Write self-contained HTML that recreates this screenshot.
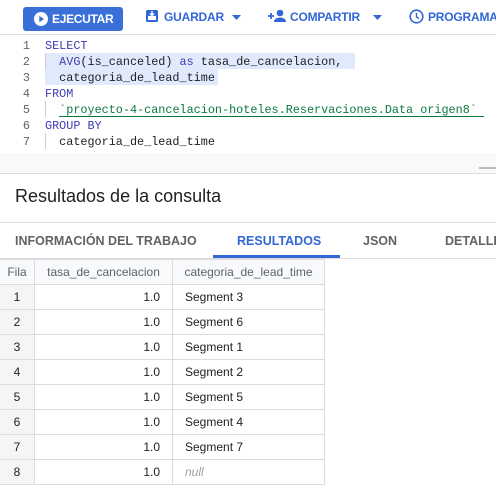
<!DOCTYPE html>
<html><head><meta charset="utf-8"><style>
*{margin:0;padding:0;box-sizing:border-box}
body{width:496px;height:489px;overflow:hidden;background:#fff;font-family:"Liberation Sans",sans-serif;position:relative}
.abs{position:absolute}
.tb{top:0;left:0;width:496px;height:35px;border-bottom:1px solid #dadce0;background:#fff}
.btn{left:23px;top:7px;width:100px;height:24px;background:#3b6fd8;border-radius:3px;color:#fff;font-weight:bold;font-size:12px;letter-spacing:-0.3px;line-height:24px;padding-left:29px}
.tbt{top:10px;font-weight:bold;font-size:12px;letter-spacing:-0.2px;color:#3367d6}
.code{font-family:"Liberation Mono",monospace;font-size:11.8px;line-height:16px;white-space:pre;color:#202124}
.ln{left:0;width:30px;text-align:right;color:#5f6368}
.kw{color:#3c3cb4}
.fn{color:#4040b0}
.str{color:#0d7a3c}
.gray{top:153px;left:0;width:496px;height:21px;background:#f8f9fa;border-bottom:1px solid #dadce0}
.title{top:186px;left:15px;font-size:18px;color:#202124}
.tabs{top:222px;left:0;width:496px;height:37px;border-top:1px solid #dadce0;border-bottom:1px solid #dadce0}
.tab{top:234px;font-size:12.5px;color:#5f6368;font-weight:bold}
table{position:absolute;top:259px;left:-1px;border-collapse:collapse;table-layout:fixed;width:325px;font-size:12px;color:#202124}
td,th{height:25px;border:1px solid #dadce0;padding:0 12px;font-weight:normal;white-space:nowrap;overflow:hidden}
th{color:#5f6368;background:#f8f9fa;text-align:center;padding:0}
td.f{background:#f5f5f5;text-align:center;padding:0}
td.n{text-align:right}
</style></head><body>
<div class="abs tb"></div>
<div class="abs btn"><svg class="abs" style="left:10px;top:4px" width="16" height="16" viewBox="0 0 16 16"><circle cx="8" cy="8" r="7" fill="#fff"/><path d="M6.3 4.8v6.4L11 8z" fill="#3b6fd8"/></svg>EJECUTAR</div>
<svg class="abs" style="left:145px;top:9px" width="14" height="14" viewBox="0 0 14 14"><rect x="1" y="1" width="12" height="12" rx="1.5" fill="#3367d6"/><rect x="3" y="7" width="8" height="4" fill="#fff"/><path d="M7 2v4M5 4.5 7 6.5 9 4.5" stroke="#fff" stroke-width="1.4" fill="none"/></svg>
<div class="abs tbt" style="left:164px">GUARDAR</div>
<svg class="abs" style="left:232px;top:15px" width="9" height="5"><path d="M0 0h9L4.5 5z" fill="#3367d6"/></svg>
<svg class="abs" style="left:268px;top:9px" width="19" height="14" viewBox="0 0 19 14"><path d="M3 4v6M0 7h6" stroke="#3367d6" stroke-width="1.8"/><circle cx="12" cy="4" r="3.3" fill="#3367d6"/><path d="M6 13c0-3 3-4.5 6-4.5s6 1.5 6 4.5z" fill="#3367d6"/></svg>
<div class="abs tbt" style="left:290px">COMPARTIR</div>
<svg class="abs" style="left:373px;top:15px" width="9" height="5"><path d="M0 0h9L4.5 5z" fill="#3367d6"/></svg>
<svg class="abs" style="left:409px;top:9px" width="15" height="15" viewBox="0 0 15 15"><circle cx="7.5" cy="7.5" r="6.3" stroke="#3367d6" stroke-width="1.6" fill="none"/><path d="M7.5 4v4l2.5 1.5" stroke="#3367d6" stroke-width="1.4" fill="none"/></svg>
<div class="abs tbt" style="left:428px">PROGRAMA</div>

<div class="abs" style="left:45px;top:53px;width:310px;height:16px;background:#e1eafc"></div>
<div class="abs" style="left:45px;top:69px;width:173px;height:16px;background:#e1eafc"></div>
<div class="abs" style="left:45px;top:101px;width:1px;height:16px;background:#ccc"></div>
<div class="abs" style="left:45px;top:133px;width:1px;height:16px;background:#ccc"></div>
<div class="abs" style="left:45px;top:53px;width:1px;height:16px;background:#ccc"></div>
<div class="abs" style="left:59px;top:116px;width:425px;height:1px;background:#0d7a3c"></div>
<div class="abs code ln" style="top:38px">1
2
3
4
5
6
7</div>
<div class="abs code" style="left:45px;top:38px"><span class="kw">SELECT</span>
  <span class="fn">AVG</span>(is_canceled) <span class="kw">as</span> tasa_de_cancelacion,
  categoria_de_lead_time
<span class="kw">FROM</span>
  <span class="str">`proyecto-4-cancelacion-hoteles.Reservaciones.Data origen8`</span>
<span class="kw">GROUP BY</span>
  categoria_de_lead_time</div>
<div class="abs gray"></div>
<div class="abs" style="left:479px;top:167px;width:17px;height:2px;background:#bbb"></div>
<div class="abs title">Resultados de la consulta</div>
<div class="abs tabs"></div>
<div class="abs tab" style="left:15px">INFORMACIÓN DEL TRABAJO</div>
<div class="abs tab" style="left:237px;color:#3367d6">RESULTADOS</div>
<div class="abs" style="left:213px;top:255px;width:127px;height:3px;background:#3367d6"></div>
<div class="abs tab" style="left:363px">JSON</div>
<div class="abs tab" style="left:445px">DETALLE</div>
<table>
<colgroup><col style="width:35px"><col style="width:138px"><col style="width:152px"></colgroup>
<tr><th>Fila</th><th>tasa_de_cancelacion</th><th>categoria_de_lead_time</th></tr>
<tr><td class="f">1</td><td class="n">1.0</td><td>Segment 3</td></tr>
<tr><td class="f">2</td><td class="n">1.0</td><td>Segment 6</td></tr>
<tr><td class="f">3</td><td class="n">1.0</td><td>Segment 1</td></tr>
<tr><td class="f">4</td><td class="n">1.0</td><td>Segment 2</td></tr>
<tr><td class="f">5</td><td class="n">1.0</td><td>Segment 5</td></tr>
<tr><td class="f">6</td><td class="n">1.0</td><td>Segment 4</td></tr>
<tr><td class="f">7</td><td class="n">1.0</td><td>Segment 7</td></tr>
<tr><td class="f">8</td><td class="n">1.0</td><td style="color:#9aa0a6;font-style:italic">null</td></tr>
</table>
</body></html>
